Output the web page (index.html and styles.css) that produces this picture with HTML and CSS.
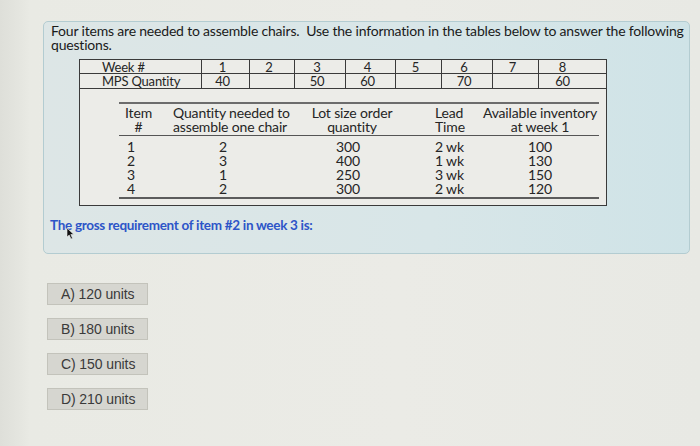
FILE: index.html
```html
<!DOCTYPE html>
<html>
<head>
<meta charset="utf-8">
<link rel="stylesheet" href="styles.css">
</head>
<body>
<div class="screen">
  <div class="panel">
    <p class="intro">Four items are needed to assemble chairs.&nbsp; Use the information in the tables below to answer the following questions.</p>
    <div class="outer">
      <div class="mps">
        <div class="lbl">Week #</div>
        <div class="num">1</div><div class="num">2</div><div class="num">3</div><div class="num">4</div>
        <div class="num">5</div><div class="num">6</div><div class="num">7</div><div class="num last">8</div>
        <div class="lbl">MPS Quantity</div>
        <div class="num">40</div><div class="num"></div><div class="num">50</div><div class="num">60</div>
        <div class="num"></div><div class="num">70</div><div class="num"></div><div class="num last">60</div>
      </div>
      <div class="inner-wrap">
        <div class="items">
          <div class="hdr c1"><span>Item<br>#</span></div>
          <div class="hdr c2">Quantity needed to<br>assemble one chair</div>
          <div class="hdr c3">Lot size order<br>quantity</div>
          <div class="hdr c4">Lead<br>Time</div>
          <div class="hdr c5">Available inventory<br>at week 1</div>

          <div class="c1">1<br>2<br>3<br>4</div>
          <div class="c2">2<br>3<br>1<br>2</div>
          <div class="c3">300<br>400<br>250<br>300</div>
          <div class="c4">2 wk<br>1 wk<br>3 wk<br>2 wk</div>
          <div class="c5">100<br>130<br>150<br>120</div>
        </div>
      </div>
    </div>
    <p class="question">The gross requirement of item #2 in week 3 is:</p>
    <svg class="cursor" width="9" height="13" viewBox="0 0 9 13"><path d="M1 1 L1 10 L3.2 8 L5 12 L6.5 11.3 L4.8 7.5 L7.8 7.5 Z" fill="#111" stroke="#eee" stroke-width="0.6"/></svg>
  </div>
  <div class="options">
    <div class="opt">A) 120 units</div>
    <div class="opt">B) 180 units</div>
    <div class="opt">C) 150 units</div>
    <div class="opt">D) 210 units</div>
  </div>
</div>
</body>
</html>
```

FILE: styles.css
```css
html, body {
  margin: 0;
  padding: 0;
}
body {
  width: 700px;
  height: 446px;
  overflow: hidden;
  background: linear-gradient(90deg, #dedfd9 0px, #e4e5df 18px, #e9eae4 30px, #ebebe6 400px, #e8e9e4 700px);
  font-family: Lato, "Open Sans", sans-serif;
  color: #222;
}
.screen {
  padding: 21px 0 0 43px;
}
.panel {
  position: relative;
  box-sizing: border-box;
  width: 647px;
  height: 233px;
  border: 1px solid #b3ccd1;
  border-radius: 5px;
  background: linear-gradient(90deg, #dde6e6 0%, #d8e6e8 60%, #cfe3e7 100%);
  padding: 2px 0 0 7px;
}
.intro {
  margin: 0;
  width: 640px;
  font-size: 14px;
  line-height: 14px;
  letter-spacing: -0.19px;
  color: #1a1a1a;
}
.outer {
  margin: 7px 0 0 28px;
  width: 528px;
  box-sizing: border-box;
  border: 1.5px solid #3a3a3a;
  background: #ecece8;
  font-size: 13px;
  letter-spacing: -0.2px;
  color: #252525;
}
.mps {
  display: grid;
  grid-template-columns: 122px 48px 45px 51px 50px 46px 51px 46px 1fr;
  grid-auto-rows: 14px;
  border-bottom: 1.5px solid #3a3a3a;
}
.mps > div {
  line-height: 14px;
  border-right: 1.5px solid #3a3a3a;
  border-bottom: 1.5px solid #3a3a3a;
}
.mps > div:nth-child(n+10) {
  border-bottom: none;
}
.mps > .last {
  border-right: none;
}
.lbl {
  padding-left: 22px;
}
.num {
  text-align: center;
  padding-right: 6px;
}
.num.last {
  padding-right: 20px;
}
.inner-wrap {
  padding: 13px 7px 6px 39px;
}
.items {
  display: grid;
  grid-template-columns: 45px 131px 112px 74px 1fr;
  border-top: 2px solid #6c6c6c;
  border-bottom: 2.5px solid #5c5c5c;
  font-size: 14px;
  letter-spacing: -0.15px;
  line-height: 14px;
}
.hdr {
  padding: 2px 0 1px;
  border-bottom: 1.5px solid #555;
  white-space: nowrap;
}
.c1 { padding-left: 8px; }
.hdr.c1 { padding-left: 6px; }
.hdr.c1 span { display: inline-block; text-align: center; }
.c2 { text-align: center; padding-right: 13px; }
.hdr.c2 { text-align: left; padding-left: 9px; padding-right: 0; }
.c3 { text-align: center; padding-right: 6px; }
.hdr.c3 { padding-right: 0; padding-left: 2px; }
.c4 { padding-left: 28px; }
.c5 { text-align: center; }
.items > div:not(.hdr) {
  padding-top: 4px;
  padding-bottom: 1px;
}
.question {
  margin: 11px 0 0 -1px;
  font-size: 13.5px;
  font-weight: 700;
  color: #2d55c8;
  letter-spacing: -0.3px;
  line-height: 16px;
}
.cursor {
  position: absolute;
  left: 22px;
  top: 205px;
}
.options {
  margin: 29px 0 0 4px;
  display: flex;
  flex-direction: column;
  gap: 13px;
}
.opt {
  box-sizing: border-box;
  width: 101px;
  height: 22px;
  background: #d6d6d0;
  border: 1px solid #c3c3bb;
  font-family: "Liberation Sans", Arial, sans-serif;
  font-size: 14px;
  line-height: 20px;
  padding-left: 13px;
  color: #3a3a3a;
  letter-spacing: -0.1px;
}
```
